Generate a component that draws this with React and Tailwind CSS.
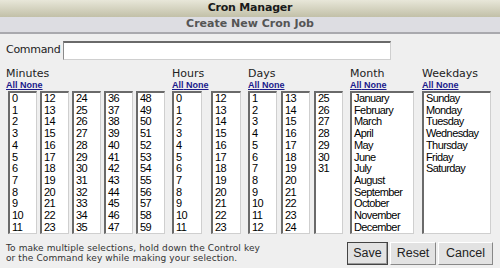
import React from 'react';

const range = (a, b) => Array.from({ length: b - a + 1 }, (_, i) => String(a + i));

const minutes = [range(0, 11), range(12, 23), range(24, 35), range(36, 47), range(48, 59)];
const hours = [range(0, 11), range(12, 23)];
const days = [range(1, 12), range(13, 24), range(25, 31)];
const months = ['January', 'February', 'March', 'April', 'May', 'June', 'July', 'August', 'September', 'October', 'November', 'December'];
const weekdays = ['Sunday', 'Monday', 'Tuesday', 'Wednesday', 'Thursday', 'Friday', 'Saturday'];

const ListBox = ({ items, w }) => (
  <div
    className={`${w} h-[143px] bg-white border-t-2 border-l-2 border-r border-b border-t-[#6a6a6a] border-l-[#6a6a6a] border-r-[#cfcfcf] border-b-[#cfcfcf] pl-[2px] overflow-hidden`}
    style={{ fontFamily: '"Liberation Sans", Arial, sans-serif' }}
  >
    {items.map(it => (
      <div key={it} className="text-[11px] leading-[11.7px] tracking-[-0.6px] text-black whitespace-nowrap">{it}</div>
    ))}
  </div>
);

const Group = ({ label, width, children }) => (
  <div className={`${width} shrink-0`}>
    <div className="text-[11px] leading-[13px] text-[#222]">{label}</div>
    <div
      className="text-[9px] leading-[10px] font-bold text-[#1a1a8c] underline mb-[1px]"
      style={{ fontFamily: '"Liberation Sans", Arial, sans-serif' }}
    >
      <span>All</span> <span>None</span>
    </div>
    {children}
  </div>
);

export default function App() {
  return (
    <div className="w-[500px] h-[268px] bg-[#efefef] overflow-hidden" style={{ fontFamily: '"DejaVu Sans", Verdana, sans-serif' }}>
      {/* title */}
      <div className="h-[17px] bg-gradient-to-b from-[#e8e7d9] to-[#c2c0a8] flex items-center justify-center">
        <span className="text-[11px] font-bold text-[#1a1a1a] tracking-[-0.2px]">Cron Manager</span>
      </div>
      <div className="h-[17px] bg-[#dddde2] border-b-2 border-[#a9a9ae] flex items-center justify-center">
        <span className="text-[11px] font-bold text-[#555]">Create New Cron Job</span>
      </div>

      <div className="px-[6px] h-[230px]">
        {/* command */}
        <div className="flex items-center mt-[7px] h-[19px]">
          <span className="text-[11px] text-[#222] w-[57px] tracking-[-0.3px]">Command</span>
          <div className="w-[328px] h-[19px] bg-white border-t-2 border-l border-r border-b border-t-[#6a6a6a] border-l-[#8a8a8a] border-r-[#cfcfcf] border-b-[#cfcfcf]" />
        </div>

        {/* selectors */}
        <div className="flex mt-[7px]">
          <Group label="Minutes" width="w-[166px]">
            <div className="flex gap-[3px] ml-[2px]">
              {minutes.map((m, i) => <ListBox key={i} items={m} w="w-[29px]" />)}
            </div>
          </Group>
          <Group label="Hours" width="w-[76px]">
            <div className="flex gap-[9px]">
              {hours.map((m, i) => <ListBox key={i} items={m} w="w-[30px]" />)}
            </div>
          </Group>
          <Group label="Days" width="w-[102px]">
            <div className="flex gap-[4px]">
              {days.map((m, i) => <ListBox key={i} items={m} w="w-[29px]" />)}
            </div>
          </Group>
          <Group label="Month" width="w-[72px]">
            <ListBox items={months} w="w-[64px]" />
          </Group>
          <Group label="Weekdays" width="w-[70px]">
            <ListBox items={weekdays} w="w-[69px]" />
          </Group>
        </div>

        {/* footer */}
        <div className="flex justify-between items-start mt-[8px]">
          <div className="text-[9px] leading-[10px] text-[#333] pt-[1px] tracking-[0.1px]">
            <div>To make multiple selections, hold down the Control key</div>
            <div>or the Command key while making your selection.</div>
          </div>
          <div className="flex gap-[2px] pr-[1px]" style={{ fontFamily: '"Liberation Sans", Arial, sans-serif' }}>
            <button className="h-[23px] w-[41px] bg-[#e2e2e2] border border-[#444] text-[12.5px] text-[#222] shadow-[inset_-1px_-1px_0_#999]">Save</button>
            <button className="h-[23px] w-[46px] bg-[#e2e2e2] border border-t-[#fff] border-l-[#fff] border-r-[#888] border-b-[#888] text-[12.5px] text-[#222]">Reset</button>
            <button className="h-[23px] w-[55px] bg-[#e2e2e2] border border-t-[#fff] border-l-[#fff] border-r-[#888] border-b-[#888] text-[12.5px] text-[#222]">Cancel</button>
          </div>
        </div>
      </div>
      <div className="h-[2px] bg-[#777]" />
    </div>
  );
}
